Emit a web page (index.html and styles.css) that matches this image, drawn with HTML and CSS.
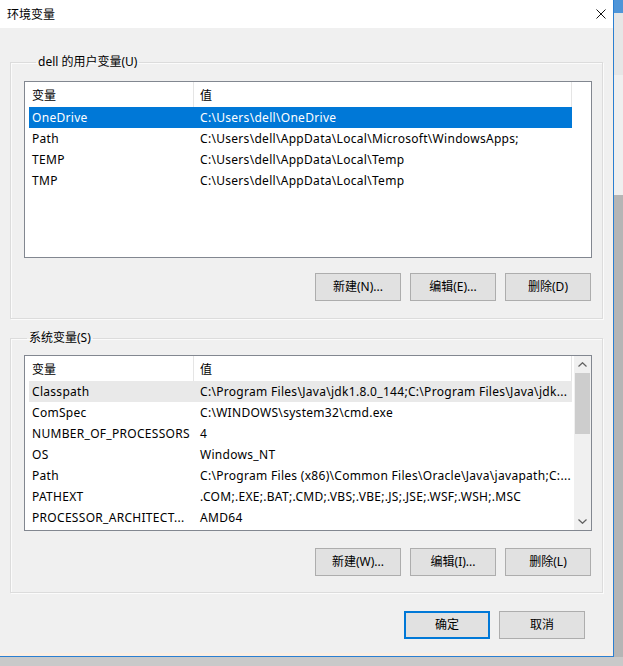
FILE: index.html
```html
<!DOCTYPE html>
<html lang="zh-CN">
<head>
<meta charset="utf-8">
<title>环境变量</title>
<link rel="stylesheet" href="styles.css">
</head>
<body>
<div class="screen">
  <div class="window">
    <div class="titlebar">
      <span class="title">环境变量</span>
      <svg class="close" width="10" height="10" viewBox="0 0 10 10"><path d="M0.5 0.5L9.5 9.5M9.5 0.5L0.5 9.5" stroke="#111" stroke-width="1" fill="none"/></svg>
    </div>
    <div class="client">
      <fieldset class="group group-user">
        <legend class="legend-user">dell 的用户变量(U)</legend>
        <div class="list list-user">
          <div class="list-main">
            <div class="head">
              <div class="h1">变量</div>
              <div class="h2">值</div>
              <div class="h3"></div>
            </div>
            <div class="rows">
              <div class="row selected"><span class="r1">OneDrive</span><span class="r2">C:\Users\dell\OneDrive</span></div>
              <div class="row"><span class="r1">Path</span><span class="r2">C:\Users\dell\AppData\Local\Microsoft\WindowsApps;</span></div>
              <div class="row"><span class="r1">TEMP</span><span class="r2">C:\Users\dell\AppData\Local\Temp</span></div>
              <div class="row"><span class="r1">TMP</span><span class="r2">C:\Users\dell\AppData\Local\Temp</span></div>
            </div>
          </div>
        </div>
        <div class="btns">
          <button class="btn">新建(N)...</button>
          <button class="btn">编辑(E)...</button>
          <button class="btn">删除(D)</button>
        </div>
      </fieldset>

      <fieldset class="group group-sys">
        <legend class="legend-sys">系统变量(S)</legend>
        <div class="list list-sys">
          <div class="list-main">
            <div class="head">
              <div class="h1">变量</div>
              <div class="h2">值</div>
              <div class="h3"></div>
            </div>
            <div class="rows">
              <div class="row hover"><span class="r1">Classpath</span><span class="r2">C:\Program Files\Java\jdk1.8.0_144;C:\Program Files\Java\jdk...</span></div>
              <div class="row"><span class="r1">ComSpec</span><span class="r2">C:\WINDOWS\system32\cmd.exe</span></div>
              <div class="row"><span class="r1">NUMBER_OF_PROCESSORS</span><span class="r2">4</span></div>
              <div class="row"><span class="r1">OS</span><span class="r2">Windows_NT</span></div>
              <div class="row"><span class="r1">Path</span><span class="r2">C:\Program Files (x86)\Common Files\Oracle\Java\javapath;C:...</span></div>
              <div class="row"><span class="r1">PATHEXT</span><span class="r2">.COM;.EXE;.BAT;.CMD;.VBS;.VBE;.JS;.JSE;.WSF;.WSH;.MSC</span></div>
              <div class="row"><span class="r1">PROCESSOR_ARCHITECT...</span><span class="r2">AMD64</span></div>
            </div>
          </div>
          <div class="scrollbar">
            <div class="sb-arrow"><svg width="9" height="5" viewBox="0 0 9 5"><path d="M0.5 4.5L4.5 0.7L8.5 4.5" stroke="#606060" stroke-width="1.2" fill="none"/></svg></div>
            <div class="sb-thumb"></div>
            <div class="sb-track"></div>
            <div class="sb-arrow"><svg width="9" height="5" viewBox="0 0 9 5"><path d="M0.5 0.5L4.5 4.3L8.5 0.5" stroke="#606060" stroke-width="1.2" fill="none"/></svg></div>
          </div>
        </div>
        <div class="btns">
          <button class="btn">新建(W)...</button>
          <button class="btn">编辑(I)...</button>
          <button class="btn">删除(L)</button>
        </div>
      </fieldset>

      <div class="dialog-btns">
        <button class="btn btn-default">确定</button>
        <button class="btn">取消</button>
      </div>
    </div>
  </div>
  <div class="side">
    <div class="side-a"></div>
    <div class="side-b"></div>
    <div class="side-c"></div>
    <div class="side-d"></div>
  </div>
</div>
</body>
</html>
```

FILE: styles.css
```css
* { box-sizing: border-box; }

html, body {
  margin: 0;
  padding: 0;
}

body {
  background: #c9c9c9;
  font-family: "Noto Sans", "Noto Sans CJK SC", sans-serif;
  font-size: 12px;
  color: #000;
  width: 623px;
  height: 666px;
  overflow: hidden;
}

.screen {
  display: flex;
  width: 623px;
  height: 657px;
}

.window {
  width: 614px;
  height: 657px;
  flex: none;
  display: flex;
  flex-direction: column;
  background: #f0f0f0;
  border-right: 1px solid #2a7fd2;
  border-bottom: 1px solid #2a7fd2;
}

.titlebar {
  height: 28px;
  flex: none;
  background: #fff;
  display: flex;
  align-items: center;
  justify-content: space-between;
  padding: 0 7px 1px 7px;
}

.title {
  font-family: "Noto Sans CJK SC", sans-serif;
  font-size: 12px;
  line-height: 16px;
}

.close {
  display: block;
}

.client {
  flex: 1;
  padding: 26px 10px 0 10px;
  box-shadow: inset -5px -7px 0 -4px #fbefe4;
}

.group {
  margin: 0;
  padding: 0 10px 17px 13px;
  border: 1px solid #dcdcdc;
  box-shadow: 1px 1px 0 #fbfbfb, inset 1px 1px 0 #fbfbfb;
  min-width: 0;
}

.group-sys {
  margin-top: 11px;
  padding-bottom: 16px;
}

legend {
  padding: 0 2px;
  line-height: 16px;
  height: 16px;
  color: #000;
}

.legend-user { margin-left: 12px; }
.legend-sys { margin-left: 3px; }

.list {
  width: 568px;
  border: 1px solid #828790;
  background: #fff;
  display: flex;
  overflow: hidden;
}

.list-user {
  margin-top: 11px;
  height: 177px;
}

.list-sys {
  margin-top: 9px;
  height: 176px;
}

.list-main {
  flex: 1;
  min-width: 0;
}

.head {
  display: flex;
  height: 25px;
}

.head > div {
  display: flex;
  align-items: center;
  white-space: nowrap;
}

.h1 {
  width: 169px;
  padding-left: 7px;
  border-right: 1px solid #e5e5e5;
  font-family: "Noto Sans CJK SC", sans-serif;
}

.h2 {
  width: 378px;
  padding-left: 6px;
  border-right: 1px solid #e5e5e5;
  font-family: "Noto Sans CJK SC", sans-serif;
}

.h3 {
  flex: 1;
}

.rows {
  margin-left: 4px;
}

.row {
  display: flex;
  align-items: center;
  width: 543px;
  height: 21px;
  white-space: nowrap;
  overflow: hidden;
  letter-spacing: 0.3px;
}

.row.selected {
  background: #0078d7;
  color: #fff;
}

.row.hover {
  background: #e9e9e9;
}

.r1 {
  width: 164px;
  flex: none;
  padding-left: 3px;
  overflow: hidden;
}

.r2 {
  flex: 1;
  min-width: 0;
  padding-left: 7px;
  overflow: hidden;
}

.scrollbar {
  width: 17px;
  flex: none;
  background: #f0f0f0;
  display: flex;
  flex-direction: column;
  margin-left: 1px;
}

.sb-arrow {
  height: 17px;
  display: flex;
  align-items: center;
  justify-content: center;
}

.sb-thumb {
  height: 61px;
  margin: 0 1px;
  background: #cdcdcd;
}

.sb-track {
  flex: 1;
}

.btns {
  display: flex;
  justify-content: flex-end;
  gap: 9px;
  margin-top: 15px;
  margin-right: 1px;
}

.group-sys .btns {
  margin-top: 17px;
}

.btn {
  width: 86px;
  height: 28px;
  margin: 0;
  padding: 0;
  background: #e1e1e1;
  border: 1px solid #adadad;
  border-radius: 0;
  font-family: "Noto Sans", "Noto Sans CJK SC", sans-serif;
  font-size: 12px;
  color: #000;
  line-height: 16px;
}

.btn-default {
  border: 2px solid #0078d7;
}

.dialog-btns {
  display: flex;
  justify-content: flex-end;
  gap: 9px;
  margin-top: 18px;
  margin-right: 18px;
}

.side {
  flex: 1;
  display: flex;
  flex-direction: column;
}

.side-a { height: 13px; background: #4f95d8; }
.side-b { height: 62px; background: #e6e6e6; }
.side-c { height: 120px; background: #efefef; }
.side-d { flex: 1; background: #b5b5b5; }
```
